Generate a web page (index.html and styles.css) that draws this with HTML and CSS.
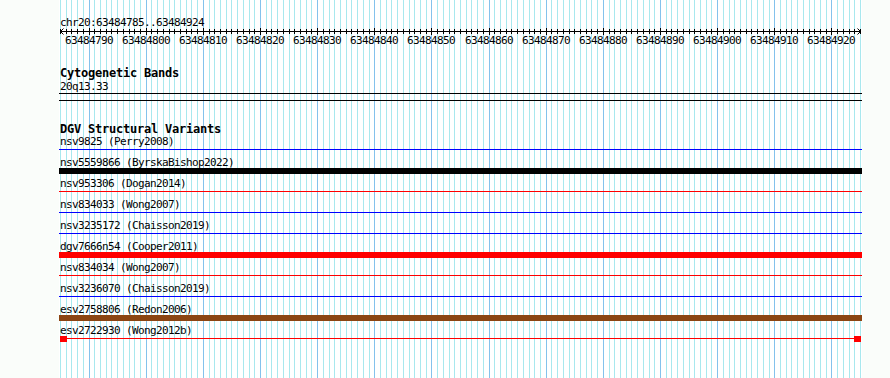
FILE: index.html
```html
<!DOCTYPE html>
<html>
<head>
<meta charset="utf-8">
<title>chr20:63484785..63484924</title>
<link rel="stylesheet" href="styles.css">
</head>
<body>
<div class="panel">
  <svg class="grid" width="803" height="378" viewBox="59 0 803 378">
    <defs>
      <pattern id="minor" x="60" y="0" width="40" height="378" patternUnits="userSpaceOnUse">
        <rect class="gl-minor" x="0" y="0" width="1" height="378"/>
        <rect class="gl-minor" x="6" y="0" width="1" height="378"/>
        <rect class="gl-minor" x="11" y="0" width="1" height="378"/>
        <rect class="gl-minor" x="17" y="0" width="1" height="378"/>
        <rect class="gl-minor" x="23" y="0" width="1" height="378"/>
        <rect class="gl-minor" x="29" y="0" width="1" height="378"/>
        <rect class="gl-minor" x="34" y="0" width="1" height="378"/>
      </pattern>
    </defs>
    <rect x="60" y="0" width="801" height="378" fill="url(#minor)"/>
    <g class="gl-major">
      <rect x="89" y="0" width="1" height="378"/>
      <rect x="146" y="0" width="1" height="378"/>
      <rect x="203" y="0" width="1" height="378"/>
      <rect x="260" y="0" width="1" height="378"/>
      <rect x="317" y="0" width="1" height="378"/>
      <rect x="374" y="0" width="1" height="378"/>
      <rect x="431" y="0" width="1" height="378"/>
      <rect x="489" y="0" width="1" height="378"/>
      <rect x="546" y="0" width="1" height="378"/>
      <rect x="603" y="0" width="1" height="378"/>
      <rect x="660" y="0" width="1" height="378"/>
      <rect x="717" y="0" width="1" height="378"/>
      <rect x="774" y="0" width="1" height="378"/>
      <rect x="831" y="0" width="1" height="378"/>
    </g>
  </svg>

  <div class="content">
    <div class="pos">chr20:63484785..63484924</div>

    <svg class="ruler" width="803" height="21" viewBox="59 26 803 21">
      <defs>
        <pattern id="ticks" x="60" y="26" width="40" height="21" patternUnits="userSpaceOnUse">
          <rect class="ink" x="0" y="3" width="1" height="5"/>
          <rect class="ink" x="6" y="3" width="1" height="5"/>
          <rect class="ink" x="11" y="3" width="1" height="5"/>
          <rect class="ink" x="17" y="3" width="1" height="5"/>
          <rect class="ink" x="23" y="3" width="1" height="5"/>
          <rect class="ink" x="29" y="3" width="1" height="5"/>
          <rect class="ink" x="34" y="3" width="1" height="5"/>
        </pattern>
      </defs>
      <rect x="60" y="26" width="801" height="21" fill="url(#ticks)"/>
      <rect class="ink" x="60" y="31" width="801" height="1"/>
      <path class="arrow" d="M60.5 31.5L63.5 28.5M60.5 31.5L63.5 34.5M860.5 31.5L857.5 28.5M860.5 31.5L857.5 34.5"/>
      <g class="major-ticks">
        <rect class="ink" x="89" y="28" width="1" height="7"/>
        <rect class="ink" x="146" y="28" width="1" height="7"/>
        <rect class="ink" x="203" y="28" width="1" height="7"/>
        <rect class="ink" x="260" y="28" width="1" height="7"/>
        <rect class="ink" x="317" y="28" width="1" height="7"/>
        <rect class="ink" x="374" y="28" width="1" height="7"/>
        <rect class="ink" x="431" y="28" width="1" height="7"/>
        <rect class="ink" x="489" y="28" width="1" height="7"/>
        <rect class="ink" x="546" y="28" width="1" height="7"/>
        <rect class="ink" x="603" y="28" width="1" height="7"/>
        <rect class="ink" x="660" y="28" width="1" height="7"/>
        <rect class="ink" x="717" y="28" width="1" height="7"/>
        <rect class="ink" x="774" y="28" width="1" height="7"/>
        <rect class="ink" x="831" y="28" width="1" height="7"/>
      </g>
      <g class="tick-labels">
        <text x="65" y="44">63484790</text>
        <text x="122" y="44">63484800</text>
        <text x="179" y="44">63484810</text>
        <text x="236" y="44">63484820</text>
        <text x="293" y="44">63484830</text>
        <text x="350" y="44">63484840</text>
        <text x="407" y="44">63484850</text>
        <text x="465" y="44">63484860</text>
        <text x="522" y="44">63484870</text>
        <text x="579" y="44">63484880</text>
        <text x="636" y="44">63484890</text>
        <text x="693" y="44">63484900</text>
        <text x="750" y="44">63484910</text>
        <text x="807" y="44">63484920</text>
      </g>
    </svg>

    <section class="track track-cyto">
      <div class="track-title">Cytogenetic Bands</div>
      <div class="label band-label">20q13.33</div>
      <div class="band-frame"></div>
    </section>

    <section class="track track-dgv">
      <div class="track-title">DGV Structural Variants</div>
      <div class="feature">
        <div class="label">nsv9825 (Perry2008)</div>
        <div class="glyph"><div class="line blue"></div></div>
      </div>
      <div class="feature">
        <div class="label">nsv5559866 (ByrskaBishop2022)</div>
        <div class="glyph"><div class="bar black"></div></div>
      </div>
      <div class="feature">
        <div class="label">nsv953306 (Dogan2014)</div>
        <div class="glyph"><div class="line red"></div></div>
      </div>
      <div class="feature">
        <div class="label">nsv834033 (Wong2007)</div>
        <div class="glyph"><div class="line blue"></div></div>
      </div>
      <div class="feature">
        <div class="label">nsv3235172 (Chaisson2019)</div>
        <div class="glyph"><div class="line blue"></div></div>
      </div>
      <div class="feature">
        <div class="label">dgv7666n54 (Cooper2011)</div>
        <div class="glyph"><div class="bar red"></div></div>
      </div>
      <div class="feature">
        <div class="label">nsv834034 (Wong2007)</div>
        <div class="glyph"><div class="line red"></div></div>
      </div>
      <div class="feature">
        <div class="label">nsv3236070 (Chaisson2019)</div>
        <div class="glyph"><div class="line blue"></div></div>
      </div>
      <div class="feature">
        <div class="label">esv2758806 (Redon2006)</div>
        <div class="glyph"><div class="bar brown"></div></div>
      </div>
      <div class="feature">
        <div class="label">esv2722930 (Wong2012b)</div>
        <div class="glyph glyph-ends">
          <span class="end-box"></span>
          <span class="end-line"></span>
          <span class="end-box"></span>
        </div>
      </div>
    </section>
  </div>
</div>
</body>
</html>
```

FILE: styles.css
```css
html, body {
  margin: 0;
  padding: 0;
}

body {
  background: #fafdfa;
  font-family: "DejaVu Sans Mono", "Liberation Mono", monospace;
  color: #000;
  overflow: hidden;
}

.panel {
  position: relative;
  margin-left: 59px;
  width: 803px;
  height: 378px;
  background: #ffffff;
  overflow: hidden;
}

.grid {
  position: absolute;
  top: 0;
  left: 0;
  display: block;
}

.gl-minor {
  fill: #a8e8ee;
}

.gl-major rect {
  fill: #84c2ec;
}

.content {
  position: relative;
  padding-top: 16px;
}

.pos,
.label {
  font-size: 11px;
  letter-spacing: -0.62px;
  line-height: 13px;
  height: 13px;
  padding-left: 1px;
  white-space: nowrap;
}

.feature .label {
  line-height: 11px;
}

.ruler {
  display: block;
  margin-top: -3px;
}

.ruler .ink {
  fill: #000;
}

.ruler .arrow {
  stroke: #000;
  stroke-width: 1;
  fill: none;
}

.tick-labels text {
  font-family: "DejaVu Sans Mono", "Liberation Mono", monospace;
  font-size: 11px;
  letter-spacing: -0.62px;
  fill: #000;
}

.track-title {
  font-size: 12px;
  font-weight: bold;
  letter-spacing: -0.22px;
  line-height: 12px;
  height: 13px;
  padding-left: 1px;
  white-space: nowrap;
}

.track-cyto {
  margin-top: 21px;
}

.track-cyto .track-title {
  height: 12px;
  line-height: 10px;
}

.band-frame {
  height: 6px;
  border-top: 1px solid #000;
  border-bottom: 1px solid #000;
}

.track-dgv {
  margin-top: 22px;
}

.feature {
  display: flex;
  flex-direction: column;
  height: 21px;
}

.glyph {
  height: 8px;
  display: flex;
  align-items: flex-start;
}

.line {
  flex: 1;
  height: 1px;
}

.bar {
  flex: 1;
  height: 6px;
  margin-top: -2px;
}

.blue { background: #0000ff; }
.red { background: #ff0000; }
.black { background: #000000; }
.brown { background: #8b4513; }

.glyph-ends {
  padding: 0 1px;
}

.end-box {
  width: 7px;
  height: 6px;
  margin-top: -2px;
  background: #ff0000;
  flex: none;
}

.end-line {
  flex: 1;
  height: 1px;
  background: #ff0000;
}
```
